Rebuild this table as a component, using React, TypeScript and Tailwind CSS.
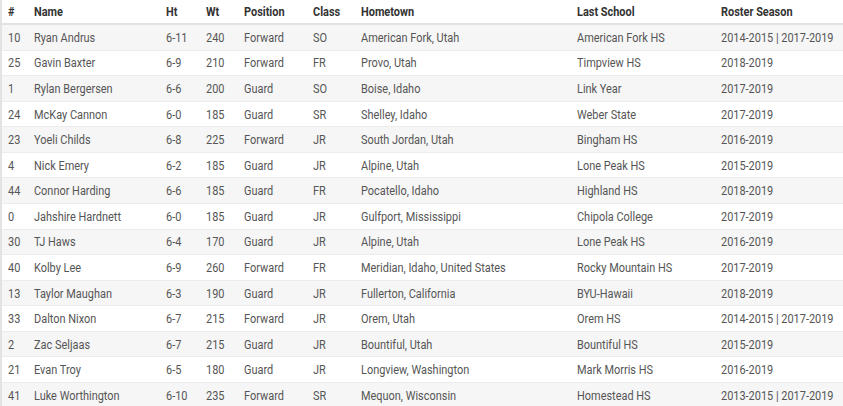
import React from "react";

const rows: string[][] = [
  ["10", "Ryan Andrus", "6-11", "240", "Forward", "SO", "American Fork, Utah", "American Fork HS", "2014-2015 | 2017-2019"],
  ["25", "Gavin Baxter", "6-9", "210", "Forward", "FR", "Provo, Utah", "Timpview HS", "2018-2019"],
  ["1", "Rylan Bergersen", "6-6", "200", "Guard", "SO", "Boise, Idaho", "Link Year", "2017-2019"],
  ["24", "McKay Cannon", "6-0", "185", "Guard", "SR", "Shelley, Idaho", "Weber State", "2017-2019"],
  ["23", "Yoeli Childs", "6-8", "225", "Forward", "JR", "South Jordan, Utah", "Bingham HS", "2016-2019"],
  ["4", "Nick Emery", "6-2", "185", "Guard", "JR", "Alpine, Utah", "Lone Peak HS", "2015-2019"],
  ["44", "Connor Harding", "6-6", "185", "Guard", "FR", "Pocatello, Idaho", "Highland HS", "2018-2019"],
  ["0", "Jahshire Hardnett", "6-0", "185", "Guard", "JR", "Gulfport, Mississippi", "Chipola College", "2017-2019"],
  ["30", "TJ Haws", "6-4", "170", "Guard", "JR", "Alpine, Utah", "Lone Peak HS", "2016-2019"],
  ["40", "Kolby Lee", "6-9", "260", "Forward", "FR", "Meridian, Idaho, United States", "Rocky Mountain HS", "2017-2019"],
  ["13", "Taylor Maughan", "6-3", "190", "Guard", "JR", "Fullerton, California", "BYU-Hawaii", "2018-2019"],
  ["33", "Dalton Nixon", "6-7", "215", "Forward", "JR", "Orem, Utah", "Orem HS", "2014-2015 | 2017-2019"],
  ["2", "Zac Seljaas", "6-7", "215", "Guard", "JR", "Bountiful, Utah", "Bountiful HS", "2015-2019"],
  ["21", "Evan Troy", "6-5", "180", "Guard", "JR", "Longview, Washington", "Mark Morris HS", "2016-2019"],
  ["41", "Luke Worthington", "6-10", "235", "Forward", "SR", "Mequon, Wisconsin", "Homestead HS", "2013-2015 | 2017-2019"],
];

const headers = ["#", "Name", "Ht", "Wt", "Position", "Class", "Hometown", "Last School", "Roster Season"];
const widths = ["w-[26px]", "w-[132px]", "w-[40px]", "w-[38px]", "w-[69px]", "w-[48px]", "w-[216px]", "w-[144px]", "w-[128px]"];

function Cell({ w, children }: { w: string; children: React.ReactNode }) {
  return (
    <div className={`${w} shrink-0 pl-[6px] whitespace-nowrap overflow-visible`}>
      <span className="inline-block origin-left scale-x-[0.875]">{children}</span>
    </div>
  );
}

export default function App() {
  return (
    <div className="w-[843px] h-[406px] overflow-hidden bg-white border-l-2 border-[#e3e3e3]" style={{ fontFamily: "Roboto, 'Liberation Sans', sans-serif" }}>
      <div className="flex h-[25px] items-center pt-[1px] border-b-2 border-[#e2e2e2] text-[12.5px] font-bold text-[#333]">
        {headers.map((h, i) => (
          <Cell key={i} w={widths[i]}>{h}</Cell>
        ))}
      </div>
      {rows.map((r, ri) => (
        <div
          key={ri}
          className={`flex h-[25.57px] items-center pt-[2px] border-b border-[#ececec] text-[12.5px] text-[#555] ${ri % 2 === 0 ? "bg-[#f6f6f6]" : "bg-white"}`}
        >
          {r.map((c, i) => (
            <Cell key={i} w={widths[i]}>{c}</Cell>
          ))}
        </div>
      ))}
    </div>
  );
}
